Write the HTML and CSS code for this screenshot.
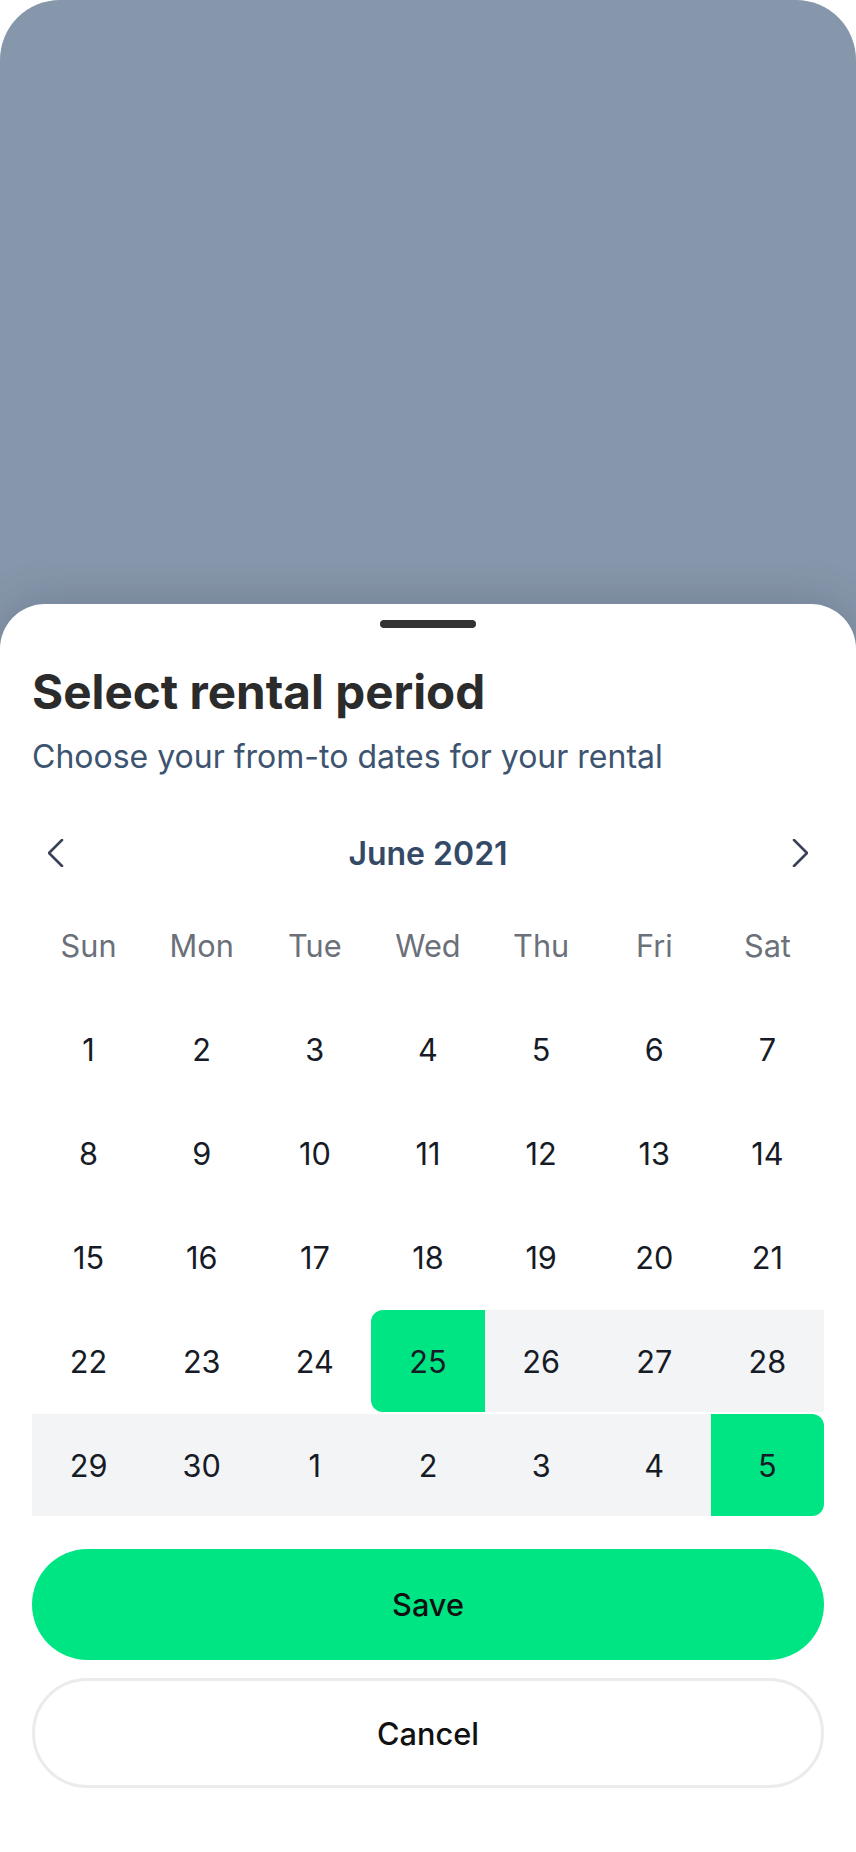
FILE: index.html
```html
<!DOCTYPE html>
<html>
<head>
  <meta charset="utf-8" />
  <title>Select rental period</title>
  <link rel="stylesheet" href="styles.css">
</head>
<body>
  <!-- dimmed page behind the bottom sheet -->
  <div class="backdrop"></div>

  <div class="sheet">
    <div class="handle"></div>

    <h1 class="title">Select rental period</h1>
    <p class="subtitle">Choose your from-to dates for your rental</p>

    <div class="month-nav">
      <button class="nav-btn" type="button" aria-label="Previous month">
        <svg width="16" height="28" viewBox="0 0 16 28"><polyline points="14,1 1,14 14,27" /></svg>
      </button>
      <span class="month-label">June 2021</span>
      <button class="nav-btn" type="button" aria-label="Next month">
        <svg width="16" height="28" viewBox="0 0 16 28"><polyline points="2,1 15,14 2,27" /></svg>
      </button>
    </div>

    <div class="calendar">
      <div class="weekday">Sun</div>
      <div class="weekday">Mon</div>
      <div class="weekday">Tue</div>
      <div class="weekday">Wed</div>
      <div class="weekday">Thu</div>
      <div class="weekday">Fri</div>
      <div class="weekday">Sat</div>

      <div class="day">1</div>
      <div class="day">2</div>
      <div class="day">3</div>
      <div class="day">4</div>
      <div class="day">5</div>
      <div class="day">6</div>
      <div class="day">7</div>

      <div class="day">8</div>
      <div class="day">9</div>
      <div class="day">10</div>
      <div class="day">11</div>
      <div class="day">12</div>
      <div class="day">13</div>
      <div class="day">14</div>

      <div class="day">15</div>
      <div class="day">16</div>
      <div class="day">17</div>
      <div class="day">18</div>
      <div class="day">19</div>
      <div class="day">20</div>
      <div class="day">21</div>

      <div class="day">22</div>
      <div class="day">23</div>
      <div class="day">24</div>
      <div class="day range-start">25</div>
      <div class="day in-range">26</div>
      <div class="day in-range">27</div>
      <div class="day in-range">28</div>

      <div class="day in-range">29</div>
      <div class="day in-range">30</div>
      <div class="day in-range">1</div>
      <div class="day in-range">2</div>
      <div class="day in-range">3</div>
      <div class="day in-range">4</div>
      <div class="day range-end">5</div>
    </div>

    <div class="actions">
      <button class="btn btn-primary" type="button">Save</button>
      <button class="btn btn-outline" type="button">Cancel</button>
    </div>
  </div>
</body>
</html>
```

FILE: styles.css
```css
/* Bottom sheet date range picker */

html, body {
  margin: 0;
  padding: 0;
  background: #ffffff;
  font-family: Inter, "Noto Sans", sans-serif;
}

.backdrop {
  height: 650px;
  background: #8797ab;
  border-radius: 60px 60px 0 0;
}

.sheet {
  position: relative;
  margin-top: -46px;
  background: #ffffff;
  border-radius: 45px 45px 0 0;
  box-shadow: 0 -6px 40px rgba(30, 40, 60, 0.18);
  padding: 16px 32px 60px;
}

.handle {
  width: 96px;
  height: 8px;
  border-radius: 4px;
  background: #333333;
  margin: 0 auto;
}

.title {
  margin: 36px 0 0;
  font-size: 47.6px;
  line-height: 56px;
  font-weight: 700;
  color: #2b2b2b;
}

.subtitle {
  margin: 17px 0 0;
  font-size: 32px;
  line-height: 40px;
  color: #3d5470;
}

.month-nav {
  display: flex;
  align-items: center;
  justify-content: space-between;
  height: 56px;
  margin-top: 48px;
  margin-bottom: 13px;
}

.nav-btn {
  background: none;
  border: none;
  padding: 0 16px;
  height: 56px;
  display: flex;
  align-items: center;
  cursor: pointer;
}

.nav-btn svg polyline {
  fill: none;
  stroke: #3a4257;
  stroke-width: 2.6;
  stroke-linecap: round;
  stroke-linejoin: round;
}

.month-label {
  font-size: 32px;
  font-weight: 600;
  color: #344966;
}

.calendar {
  display: grid;
  grid-template-columns: repeat(7, 1fr);
  grid-auto-rows: 102px;
  row-gap: 2px;
}

.weekday,
.day {
  display: flex;
  align-items: center;
  justify-content: center;
  font-size: 30.7px;
}

.weekday {
  color: #6b7079;
}

.day {
  color: #161b26;
}

.in-range {
  background: #f2f4f6;
}

.range-start,
.range-end {
  background: #00e584;
}

.range-start {
  border-radius: 12px 0 0 12px;
}

.range-end {
  border-radius: 0 12px 12px 0;
}

.actions {
  display: flex;
  flex-direction: column;
  gap: 18px;
  margin-top: 33px;
}

.btn {
  width: 100%;
  border-radius: 56px;
  font-family: inherit;
  font-size: 30.7px;
  font-weight: 500;
  color: #111111;
  cursor: pointer;
}

.btn-primary {
  height: 111px;
  background: #00e584;
  border: none;
}

.btn-outline {
  height: 110px;
  background: #ffffff;
  border: 3px solid #ebebeb;
}
```
